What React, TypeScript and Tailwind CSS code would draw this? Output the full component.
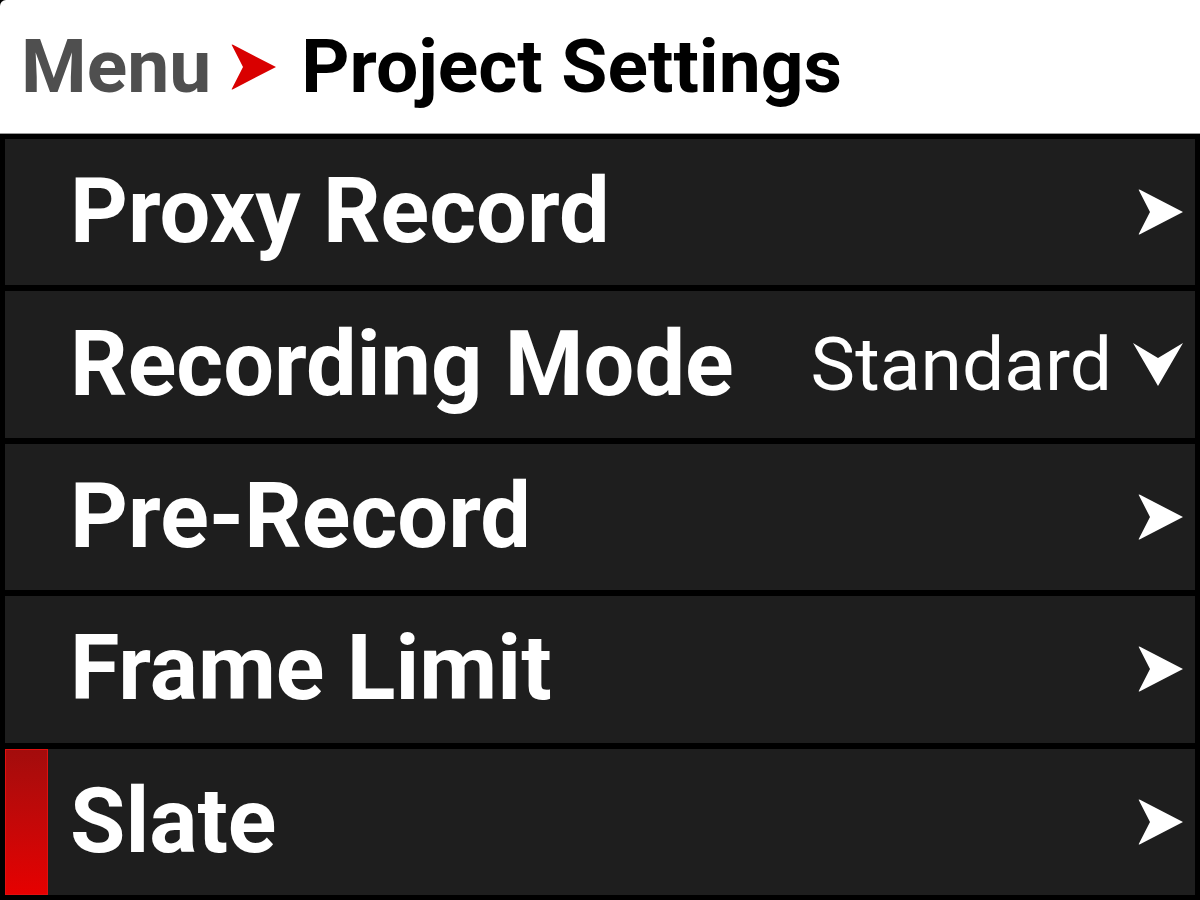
import React from "react";

const ArrowRight = ({ className }: { className?: string }) => (
  <svg viewBox="0 0 45 46" className={className} fill="currentColor">
    <path d="M1 1.5 Q0 0 2 0.8 L45 23 L2 45.2 Q0 46 1 44.5 L12 23 Z" />
  </svg>
);

const ArrowDown = ({ className }: { className?: string }) => (
  <svg viewBox="0 0 50 43" className={className} fill="currentColor">
    <path d="M0 0 L25 15 L50 0 L25 43 Z" />
  </svg>
);

const rows: { label: string; value?: string; down?: boolean; active?: boolean }[] = [
  { label: "Proxy Record" },
  { label: "Recording Mode", value: "Standard", down: true },
  { label: "Pre-Record" },
  { label: "Frame Limit" },
  { label: "Slate", active: true },
];

export default function App() {
  return (
    <div
      className="w-[1200px] h-[900px] bg-black flex flex-col overflow-hidden"
      style={{ fontFamily: "Roboto, 'Liberation Sans', sans-serif" }}
    >
      <div className="h-[134px] bg-white rounded-tl-[6px] flex items-center pl-[21px] border-b border-[#9a9a9a] shrink-0">
        <span className="text-[75px] font-bold text-[#4f4f4f] leading-none">Menu</span>
        <ArrowRight className="w-[45px] h-[50px] text-[#d90000] ml-[20px] mr-[25px]" />
        <span className="text-[75px] font-bold text-black leading-none">Project Settings</span>
      </div>
      <div className="flex-1 flex flex-col gap-[6px] px-[5px] pt-[5px] pb-[5px]">
        {rows.map((r) => (
          <div key={r.label} className="flex-1 bg-[#1e1e1e] flex items-center relative">
            {r.active && (
              <div className="absolute left-0 top-0 bottom-0 w-[43px] bg-gradient-to-b from-[#a30c0c] to-[#e60000] border border-[#e01010]" />
            )}
            <span className="pl-[65px] text-[90px] font-bold text-white leading-none flex-1">
              {r.label}
            </span>
            {r.value && (
              <span className="text-[75px] text-white leading-none mr-[21px]">{r.value}</span>
            )}
            {r.down ? (
              <ArrowDown className="w-[50px] h-[43px] text-white mr-[12px]" />
            ) : (
              <ArrowRight className="w-[45px] h-[46px] text-white mr-[12px]" />
            )}
          </div>
        ))}
      </div>
    </div>
  );
}
